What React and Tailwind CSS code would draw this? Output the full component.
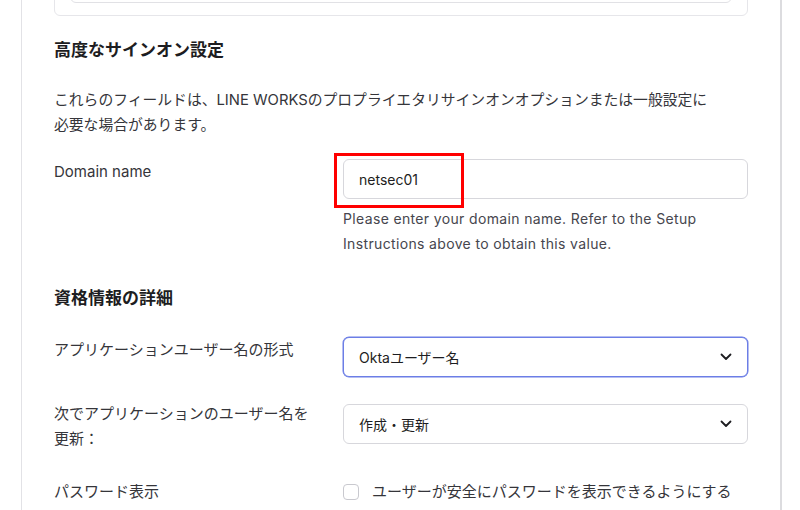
import React from "react";

const font = { fontFamily: '"Inter", "Noto Sans CJK JP", sans-serif' };

const Chevron = () => (
  <svg width="12" height="8" viewBox="0 0 12 8" fill="none">
    <path d="M1.5 1.5l4.5 4.5 4.5-4.5" stroke="#1d1d21" strokeWidth="1.8" strokeLinecap="round" strokeLinejoin="round" />
  </svg>
);

const Select = ({ value, focused }) => (
  <div
    className={
      "flex h-[40px] w-full items-center justify-between rounded-[6px] bg-white pl-[15px] pr-[15px] text-[14px] text-[#1d1d21] " +
      (focused
        ? "border border-[#6c7ee6] shadow-[0_0_0_0.5px_#6c7ee6]"
        : "border border-[#d7d7dc]")
    }
  >
    <span>{value}</span>
    <Chevron />
  </div>
);

export default function App() {
  return (
    <div className="flex h-[510px] w-[800px] overflow-hidden bg-white" style={font}>
      <div className="w-[22px] shrink-0 border-r border-[#e2e2e6]" />
      <div className="w-[758px] shrink-0 px-[32px]">
        {/* top of previous card, scrolled off */}
        <div className="-mt-[40px] h-[56px] rounded-[6px] border border-[#e6e6ea] px-[15px] pb-[12px]">
          <div className="h-full rounded-[6px] border border-[#e1e1e5]" />
        </div>

        <h2 className="mt-[22px] text-[17px] font-semibold leading-[24px] text-[#1d1d21]">
          高度なサインオン設定
        </h2>
        <p className="mt-[26px] text-[14.8px] leading-[25px] text-[#35353a]">
          これらのフィールドは、LINE WORKSのプロプライエタリサインオンオプションまたは一般設定に
          <br />
          必要な場合があります。
        </p>

        <div className="mt-[21px] flex">
          <div className="w-[289px] shrink-0 pt-[2px] text-[15px] leading-[22px] text-[#35353a]">Domain name</div>
          <div className="relative flex-1">
            <div className="flex h-[40px] items-center rounded-[6px] border border-[#d7d7dc] px-[15px] text-[14px] text-[#1d1d21]">
              netsec01
            </div>
            <div className="pointer-events-none absolute -left-[9px] -top-[6px] h-[55px] w-[130px] border-[3px] border-[#ff0000]" />
            <p className="mt-[7px] text-[14px] leading-[25px] tracking-[0.35px] text-[#46464e]">
              Please enter your domain name. Refer to the Setup
              <br />
              Instructions above to obtain this value.
            </p>
          </div>
        </div>

        <h2 className="mt-[30px] text-[17px] font-semibold leading-[24px] text-[#1d1d21]">
          資格情報の詳細
        </h2>

        <div className="mt-[27px] flex">
          <div className="w-[289px] shrink-0 text-[15px] leading-[26px] text-[#35353a]">
            アプリケーションユーザー名の形式
          </div>
          <div className="flex-1">
            <Select value="Oktaユーザー名" focused />
          </div>
        </div>

        <div className="mt-[24px] flex items-start">
          <div className="w-[289px] shrink-0 text-[15px] leading-[25px] text-[#35353a]">
            次でアプリケーションのユーザー名を
            <br />
            更新：
          </div>
          <div className="mt-[3px] flex-1">
            <Select value="作成・更新" />
          </div>
        </div>

        <div className="mt-[28px] flex items-center">
          <div className="w-[289px] shrink-0 text-[15px] leading-[25px] text-[#35353a]">パスワード表示</div>
          <label className="flex flex-1 items-center gap-[13px] text-[15px] leading-[25px] text-[#35353a]">
            <span className="mt-[1px] h-[16px] w-[16px] rounded-[4px] border border-[#c9c9cf] bg-white" />
            ユーザーが安全にパスワードを表示できるようにする
          </label>
        </div>
      </div>
      <div className="flex-1 border-l-2 border-[#dcdcdf]" />
    </div>
  );
}
